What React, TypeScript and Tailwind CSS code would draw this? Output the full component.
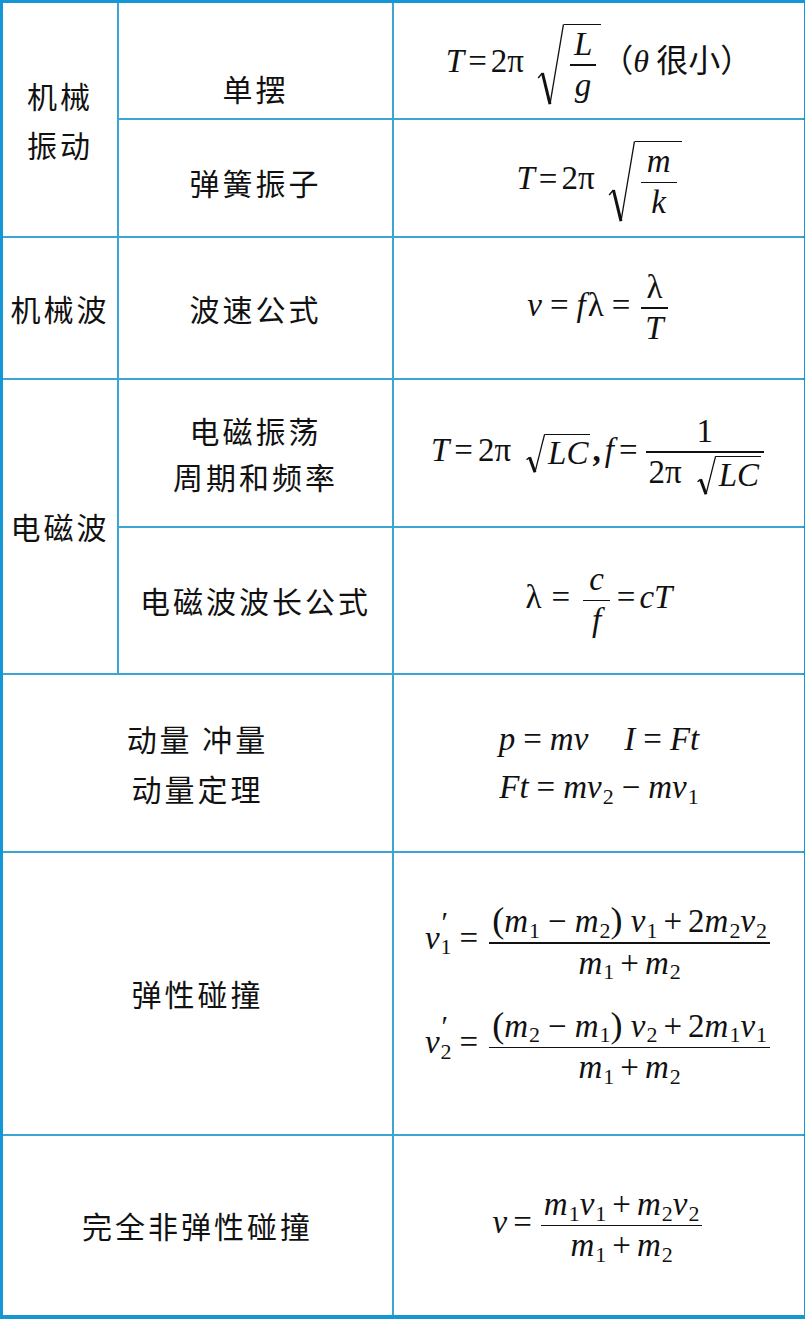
import React from "react";

const cjk = "font-['Noto_Sans_CJK_SC','Noto_Sans',sans-serif]";
const serif = "font-['Liberation_Serif','Times_New_Roman',serif]";

function Frac({ n, d, pad = "px-[4px]" }: { n: React.ReactNode; d: React.ReactNode; pad?: string }) {
  return (
    <span className="inline-flex flex-col items-stretch text-center align-middle mx-[3px]">
      <span className={`block ${pad} leading-[1.2] whitespace-nowrap`}>{n}</span>
      <span className="block h-[1.5px] bg-[#111]" />
      <span className={`block ${pad} leading-[1.2] whitespace-nowrap`}>{d}</span>
    </span>
  );
}

function Sqrt({ children, w = "w-[28px]" }: { children: React.ReactNode; w?: string }) {
  return (
    <span className="inline-flex items-stretch align-middle">
      <span className={`relative ${w}`}>
        <svg
          className="absolute inset-0 h-full w-full overflow-visible"
          viewBox="0 0 26 100"
          preserveAspectRatio="none"
        >
          <path d="M2 66 L6 60" fill="none" stroke="#111" strokeWidth="1.4" vectorEffect="non-scaling-stroke" />
          <path d="M6 60 L13 98" fill="none" stroke="#111" strokeWidth="3" vectorEffect="non-scaling-stroke" />
          <path d="M13 98 L25.5 0.5" fill="none" stroke="#111" strokeWidth="1.3" vectorEffect="non-scaling-stroke" />
        </svg>
      </span>
      <span className="border-t-[1.5px] border-[#111] pl-[3px] pr-[2px] leading-[1.15] whitespace-nowrap">{children}</span>
    </span>
  );
}

const Eq = ({ cls = "mx-[6px]" }: { cls?: string }) => <span className={cls}>=</span>;
const I = ({ children }: { children: React.ReactNode }) => <i className="italic">{children}</i>;
const Sb = ({ children }: { children: React.ReactNode }) => <sub className="text-[22px] ml-[1px]">{children}</sub>;

function VPrime({ n }: { n: string }) {
  return (
    <span className="whitespace-nowrap">
      <I>v</I>
      <span className="relative inline-block">
        <sub className="text-[22px] ml-[1px]">{n}</sub>
        <span className="absolute left-[2px] top-[-12px] text-[30px] leading-none">′</span>
      </span>
    </span>
  );
}

function Cell({ className = "", children }: { className?: string; children: React.ReactNode }) {
  return <div className={`bg-white flex items-center justify-center ${className}`}>{children}</div>;
}

const Zh = ({ children, className = "" }: { children: React.ReactNode; className?: string }) => (
  <div className={`${cjk} text-[30px] tracking-[3px] text-[#111] text-center ${className}`}>{children}</div>
);

const Fm = ({ children, className = "" }: { children: React.ReactNode; className?: string }) => (
  <div className={`${serif} text-[33px] text-[#111] whitespace-nowrap leading-[1.2] ${className}`}>{children}</div>
);

export default function App() {
  return (
    <div className="w-[805px] h-[1319px] bg-[#1597d6] pt-[3px] pl-[3px] pr-[2px] pb-[4px]">
      <div className="w-full h-full bg-[#3da4d6] grid grid-cols-[114px_273px_410px] grid-rows-[115px_116px_140px_146px_145px_176px_281px_179px] gap-[2px]">
        {/* 机械振动 */}
        <Cell className="row-span-2">
          <Zh className="leading-[49px]">
            机械
            <br />
            振动
          </Zh>
        </Cell>
        <Cell className="pt-[56px]">
          <Zh>单摆</Zh>
        </Cell>
        <Cell className="pt-[8px]">
          <Fm>
            <I>T</I>
            <Eq cls="mx-[4px]" />
            2π
            <span className="inline-block w-[12px]" />
            <Sqrt>
              <Frac n={<I>L</I>} d={<I>g</I>} />
            </Sqrt>
            <span className={`${cjk} text-[32px]`}>
              （<span className={`${serif} italic`}>θ</span> 很小）
            </span>
          </Fm>
        </Cell>
        <Cell className="pt-[8px]">
          <Zh>弹簧振子</Zh>
        </Cell>
        <Cell className="pt-[8px]">
          <Fm>
            <I>T</I>
            <Eq cls="mx-[4px]" />
            2π
            <span className="inline-block w-[12px]" />
            <Sqrt>
              <Frac n={<I>m</I>} d={<I>k</I>} pad="px-[6px]" />
            </Sqrt>
          </Fm>
        </Cell>

        {/* 机械波 */}
        <Cell>
          <Zh className="tracking-[2px]">机械波</Zh>
        </Cell>
        <Cell>
          <Zh>波速公式</Zh>
        </Cell>
        <Cell>
          <Fm>
            <I>v</I>
            <Eq cls="mx-[8px]" />
            <I>f</I>
            <span className="ml-[2px]">λ</span>
            <Eq cls="mx-[8px]" />
            <Frac n="λ" d={<I>T</I>} pad="px-[4px]" />
          </Fm>
        </Cell>

        {/* 电磁波 */}
        <Cell className="row-span-2">
          <Zh className="tracking-[2px]">电磁波</Zh>
        </Cell>
        <Cell>
          <Zh className="leading-[46px]">
            电磁振荡
            <br />
            周期和频率
          </Zh>
        </Cell>
        <Cell>
          <Fm>
            <I>T</I>
            <Eq cls="mx-[5px]" />
            2π
            <span className="inline-block w-[14px]" />
            <Sqrt w="w-[20px]">
              <I>LC</I>
            </Sqrt>
            <span className="font-bold ml-[2px] mr-[4px]">,</span>
            <I>f</I>
            <Eq cls="mx-[5px]" />
            <Frac
              n="1"
              d={
                <>
                  2π<span className="inline-block w-[14px]" />
                  <Sqrt w="w-[20px]">
                    <I>LC</I>
                  </Sqrt>
                </>
              }
              pad="px-[3px]"
            />
          </Fm>
        </Cell>
        <Cell>
          <Zh>电磁波波长公式</Zh>
        </Cell>
        <Cell>
          <Fm>
            λ
            <Eq cls="mx-[10px]" />
            <Frac n={<I>c</I>} d={<I>f</I>} pad="px-[6px]" />
            <Eq cls="mx-[4px]" />
            <I>cT</I>
          </Fm>
        </Cell>

        {/* 动量 */}
        <Cell className="col-span-2">
          <Zh className="leading-[50px]">
            动量 冲量
            <br />
            动量定理
          </Zh>
        </Cell>
        <Cell>
          <Fm className="leading-[48px] text-center">
            <div>
              <I>p</I>
              <Eq cls="mx-[8px]" />
              <I>mv</I>
              <span className="inline-block w-[36px]" />
              <I>I</I>
              <Eq cls="mx-[8px]" />
              <I>Ft</I>
            </div>
            <div>
              <I>Ft</I>
              <Eq cls="mx-[8px]" />
              <I>mv</I>
              <Sb>2</Sb>
              <span className="mx-[8px]">−</span>
              <I>mv</I>
              <Sb>1</Sb>
            </div>
          </Fm>
        </Cell>

        {/* 弹性碰撞 */}
        <Cell className="col-span-2">
          <Zh>弹性碰撞</Zh>
        </Cell>
        <Cell>
          <Fm className="flex flex-col gap-[20px] items-start">
            <div>
              <VPrime n="1" />
              <Eq cls="mx-[8px]" />
              <Frac
                pad="px-[3px]"
                n={
                  <>
                    <span className="text-[36px]">(</span>
                    <I>m</I>
                    <Sb>1</Sb>
                    <span className="mx-[8px]">−</span>
                    <I>m</I>
                    <Sb>2</Sb>
                    <span className="text-[36px]">)</span> <I>v</I>
                    <Sb>1</Sb>
                    <span className="mx-[6px]">+</span>2<I>m</I>
                    <Sb>2</Sb>
                    <I>v</I>
                    <Sb>2</Sb>
                  </>
                }
                d={
                  <>
                    <I>m</I>
                    <Sb>1</Sb>
                    <span className="mx-[6px]">+</span>
                    <I>m</I>
                    <Sb>2</Sb>
                  </>
                }
              />
            </div>
            <div>
              <VPrime n="2" />
              <Eq cls="mx-[8px]" />
              <Frac
                pad="px-[3px]"
                n={
                  <>
                    <span className="text-[36px]">(</span>
                    <I>m</I>
                    <Sb>2</Sb>
                    <span className="mx-[8px]">−</span>
                    <I>m</I>
                    <Sb>1</Sb>
                    <span className="text-[36px]">)</span> <I>v</I>
                    <Sb>2</Sb>
                    <span className="mx-[6px]">+</span>2<I>m</I>
                    <Sb>1</Sb>
                    <I>v</I>
                    <Sb>1</Sb>
                  </>
                }
                d={
                  <>
                    <I>m</I>
                    <Sb>1</Sb>
                    <span className="mx-[6px]">+</span>
                    <I>m</I>
                    <Sb>2</Sb>
                  </>
                }
              />
            </div>
          </Fm>
        </Cell>

        {/* 完全非弹性碰撞 */}
        <Cell className="col-span-2">
          <Zh>完全非弹性碰撞</Zh>
        </Cell>
        <Cell>
          <Fm>
            <I>v</I>
            <Eq cls="mx-[6px]" />
            <Frac
              pad="px-[3px]"
              n={
                <>
                  <I>m</I>
                  <Sb>1</Sb>
                  <I>v</I>
                  <Sb>1</Sb>
                  <span className="mx-[6px]">+</span>
                  <I>m</I>
                  <Sb>2</Sb>
                  <I>v</I>
                  <Sb>2</Sb>
                </>
              }
              d={
                <>
                  <I>m</I>
                  <Sb>1</Sb>
                  <span className="mx-[6px]">+</span>
                  <I>m</I>
                  <Sb>2</Sb>
                </>
              }
            />
          </Fm>
        </Cell>
      </div>
    </div>
  );
}
